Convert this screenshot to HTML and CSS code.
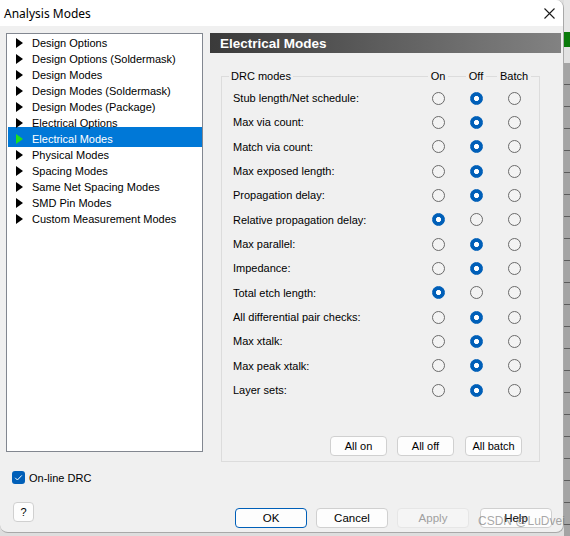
FILE: index.html
```html
<!DOCTYPE html>
<html>
<head>
<meta charset="utf-8">
<title>Analysis Modes</title>
<link rel="stylesheet" href="styles.css">
</head>
<body>
<div class="screen">
  <div class="window">
    <div class="titlebar">
      <span class="title">Analysis Modes</span>
      <svg class="close" width="11" height="11" viewBox="0 0 11 11"><path d="M0.5 0.5 L10.5 10.5 M10.5 0.5 L0.5 10.5" stroke="#1a1a1a" stroke-width="1.1" fill="none"/></svg>
    </div>
    <div class="main">
      <ul class="list">
        <li class="item"><i class="tri"></i><span>Design Options</span></li>
        <li class="item"><i class="tri"></i><span>Design Options (Soldermask)</span></li>
        <li class="item"><i class="tri"></i><span>Design Modes</span></li>
        <li class="item"><i class="tri"></i><span>Design Modes (Soldermask)</span></li>
        <li class="item"><i class="tri"></i><span>Design Modes (Package)</span></li>
        <li class="item"><i class="tri"></i><span>Electrical Options</span></li>
        <li class="item selected"><i class="tri"></i><span>Electrical Modes</span></li>
        <li class="item"><i class="tri"></i><span>Physical Modes</span></li>
        <li class="item"><i class="tri"></i><span>Spacing Modes</span></li>
        <li class="item"><i class="tri"></i><span>Same Net Spacing Modes</span></li>
        <li class="item"><i class="tri"></i><span>SMD Pin Modes</span></li>
        <li class="item"><i class="tri"></i><span>Custom Measurement Modes</span></li>
      </ul>
      <div class="panel">
        <div class="panel-head">Electrical Modes</div>
        <div class="group">
          <div class="group-head">
            <span class="legend">DRC modes</span>
            <div class="cols">
              <div class="col"><span>On</span></div>
              <div class="col"><span>Off</span></div>
              <div class="col"><span>Batch</span></div>
            </div>
          </div>
          <div class="rows">
            <div class="row"><span class="label">Stub length/Net schedule:</span><div class="cols"><div class="col"><i class="radio"></i></div><div class="col"><i class="radio on"></i></div><div class="col"><i class="radio"></i></div></div></div>
            <div class="row"><span class="label">Max via count:</span><div class="cols"><div class="col"><i class="radio"></i></div><div class="col"><i class="radio on"></i></div><div class="col"><i class="radio"></i></div></div></div>
            <div class="row"><span class="label">Match via count:</span><div class="cols"><div class="col"><i class="radio"></i></div><div class="col"><i class="radio on"></i></div><div class="col"><i class="radio"></i></div></div></div>
            <div class="row"><span class="label">Max exposed length:</span><div class="cols"><div class="col"><i class="radio"></i></div><div class="col"><i class="radio on"></i></div><div class="col"><i class="radio"></i></div></div></div>
            <div class="row"><span class="label">Propagation delay:</span><div class="cols"><div class="col"><i class="radio"></i></div><div class="col"><i class="radio on"></i></div><div class="col"><i class="radio"></i></div></div></div>
            <div class="row"><span class="label">Relative propagation delay:</span><div class="cols"><div class="col"><i class="radio on"></i></div><div class="col"><i class="radio"></i></div><div class="col"><i class="radio"></i></div></div></div>
            <div class="row"><span class="label">Max parallel:</span><div class="cols"><div class="col"><i class="radio"></i></div><div class="col"><i class="radio on"></i></div><div class="col"><i class="radio"></i></div></div></div>
            <div class="row"><span class="label">Impedance:</span><div class="cols"><div class="col"><i class="radio"></i></div><div class="col"><i class="radio on"></i></div><div class="col"><i class="radio"></i></div></div></div>
            <div class="row"><span class="label">Total etch length:</span><div class="cols"><div class="col"><i class="radio on"></i></div><div class="col"><i class="radio"></i></div><div class="col"><i class="radio"></i></div></div></div>
            <div class="row"><span class="label">All differential pair checks:</span><div class="cols"><div class="col"><i class="radio"></i></div><div class="col"><i class="radio on"></i></div><div class="col"><i class="radio"></i></div></div></div>
            <div class="row"><span class="label">Max xtalk:</span><div class="cols"><div class="col"><i class="radio"></i></div><div class="col"><i class="radio on"></i></div><div class="col"><i class="radio"></i></div></div></div>
            <div class="row"><span class="label">Max peak xtalk:</span><div class="cols"><div class="col"><i class="radio"></i></div><div class="col"><i class="radio on"></i></div><div class="col"><i class="radio"></i></div></div></div>
            <div class="row"><span class="label">Layer sets:</span><div class="cols"><div class="col"><i class="radio"></i></div><div class="col"><i class="radio on"></i></div><div class="col"><i class="radio"></i></div></div></div>
          </div>
          <div class="btnrow">
            <button class="btn small">All on</button>
            <button class="btn small">All off</button>
            <button class="btn small">All batch</button>
          </div>
        </div>
      </div>
    </div>
    <div class="check-row">
      <span class="checkbox"><svg width="13" height="13" viewBox="0 0 13 13"><path d="M3.2 6.8 L5.4 9 L9.8 4.4" stroke="#fff" stroke-width="1" fill="none"/></svg></span>
      <span>On-line DRC</span>
    </div>
    <div class="bottom">
      <button class="btn qbtn">?</button>
      <div class="actions">
        <button class="btn wide default">OK</button>
        <button class="btn wide">Cancel</button>
        <button class="btn wide disabled">Apply</button>
        <button class="btn wide help">Help</button>
      </div>
    </div>
  </div>
  <div class="strip">
    <div class="strip-top"></div>
    <div class="strip-green"></div>
    <div class="strip-light"></div>
    <div class="strip-cells"></div>
  </div>
  <span class="watermark">CSDN @LuDvei</span>
</div>
</body>
</html>
```
FILE: styles.css
```css
* { box-sizing: border-box; }
html, body { margin: 0; padding: 0; }
body {
  width: 570px;
  height: 536px;
  overflow: hidden;
  background: #dedede;
  font-family: "Liberation Sans", Arial, sans-serif;
  font-size: 11px;
  color: #000;
}
.screen {
  display: flex;
  width: 570px;
  height: 536px;
  position: relative;
}
.window {
  flex: none;
  width: 564px;
  height: 533px;
  background: #f0f0f0;
  border-right: 1px solid #a9a9a9;
  border-bottom: 1px solid #a9a9a9;
  border-radius: 0 8px 8px 8px;
  display: flex;
  flex-direction: column;
  overflow: hidden;
}
.titlebar {
  flex: none;
  height: 26px;
  background: #ffffff;
  display: flex;
  align-items: center;
  justify-content: space-between;
  padding: 0 8px 0 4px;
  font-family: "Noto Sans", "Segoe UI", sans-serif;
  font-size: 12px;
  color: #000;
}
.main {
  display: flex;
  align-items: flex-start;
  margin-top: 7px;
  padding-left: 6px;
}
.list {
  flex: none;
  list-style: none;
  margin: 0;
  width: 197px;
  height: 419px;
  background: #fff;
  border: 1px solid #828790;
  padding: 1px 0 0 0;
}
.item {
  height: 16px;
  display: flex;
  align-items: center;
  padding-left: 9px;
  white-space: nowrap;
}
.tri {
  width: 0;
  height: 0;
  border-left: 7px solid #000;
  border-top: 5px solid transparent;
  border-bottom: 5px solid transparent;
  margin-right: 9px;
}
.item.selected {
  background: #0078d7;
  box-shadow: 0 -4px 0 0 #0078d7;
  color: #fff;
  margin-left: 1px;
  padding-left: 8px;
}
.item.selected .tri { border-left-color: #1ee01e; }
.panel {
  flex: none;
  margin-left: 7px;
  width: 351px;
}
.panel-head {
  height: 20px;
  background: linear-gradient(to right, #3a3a3a, #828282);
  color: #fff;
  font-weight: bold;
  font-size: 13.5px;
  padding-left: 10px;
  display: flex;
  align-items: center;
}
.group {
  margin: 23px 0 0 11px;
  width: 319px;
  height: 386px;
  border: 1px solid #dcdcdc;
  display: flex;
  flex-direction: column;
  padding-bottom: 5px;
}
.group-head {
  display: flex;
  align-items: center;
  height: 14px;
  margin-top: -8px;
}
.legend {
  margin-left: 7px;
  padding: 0 2px;
  background: #f0f0f0;
}
.cols {
  margin-left: auto;
  display: flex;
  padding-right: 6px;
}
.col {
  width: 38px;
  display: flex;
  justify-content: center;
  align-items: center;
}
.group-head .col span {
  background: #f0f0f0;
  padding: 0 3px;
}
.rows { margin-top: 3px; }
.row {
  height: 24.33px;
  display: flex;
  align-items: center;
}
.label {
  flex: 1;
  padding-left: 11px;
  white-space: nowrap;
}
.radio {
  display: block;
  width: 13px;
  height: 13px;
  border-radius: 50%;
  border: 1px solid #6a6a6a;
  background: #f3f3f3;
}
.radio.on {
  border-color: #005fb8;
  background: radial-gradient(circle, #fff 0 2.2px, #005fb8 2.9px);
}
.btnrow {
  margin-top: auto;
  display: flex;
  justify-content: flex-end;
  gap: 10px;
  padding-right: 17px;
}
.btn {
  font-family: "Liberation Sans", Arial, sans-serif;
  font-size: 11px;
  color: #000;
  height: 20px;
  background: #fdfdfd;
  border: 1px solid #d0d0d0;
  border-radius: 4px;
  padding: 0;
  display: flex;
  align-items: center;
  justify-content: center;
}
.btn.small { width: 57px; }
.btn.small:last-child { margin-left: 1px; }
.check-row {
  display: flex;
  align-items: center;
  gap: 4px;
  margin-top: 9px;
  padding-left: 12px;
  height: 13px;
}
.checkbox {
  width: 13px;
  height: 13px;
  border-radius: 3px;
  background: #005fb8;
  display: block;
}
.checkbox svg { display: block; }
.bottom {
  display: flex;
  align-items: flex-start;
  margin-top: 18px;
  padding-left: 13px;
  padding-right: 11px;
}
.qbtn { width: 21px; height: 20px; }
.actions {
  margin-left: auto;
  margin-top: 6px;
  display: flex;
  gap: 9px;
}
.btn.wide { width: 72px; font-size: 11.5px; }
.btn.default { border-color: #005fb8; }
.btn.disabled { background: #f5f5f5; border-color: #e6e6e6; color: #a0a0a0; }
.btn.help { margin-left: 2px; }
.strip {
  flex: 1;
  display: flex;
  flex-direction: column;
}
.strip-top {
  height: 32px;
  background: #e6e6e6;
}
.strip-green {
  height: 15px;
  background: #0a7a0a;
}
.strip-light {
  height: 16px;
  background: #e2e2e2;
}
.strip-cells {
  flex: 1;
  background: repeating-linear-gradient(to bottom, #a4a4a4 0 21px, #5c5c5c 21px 22px);
}
.watermark {
  position: absolute;
  left: 478px;
  top: 514px;
  font-family: "Liberation Sans", Arial, sans-serif;
  font-size: 12px;
  color: rgba(110, 110, 110, 0.6);
  white-space: nowrap;
}
```
